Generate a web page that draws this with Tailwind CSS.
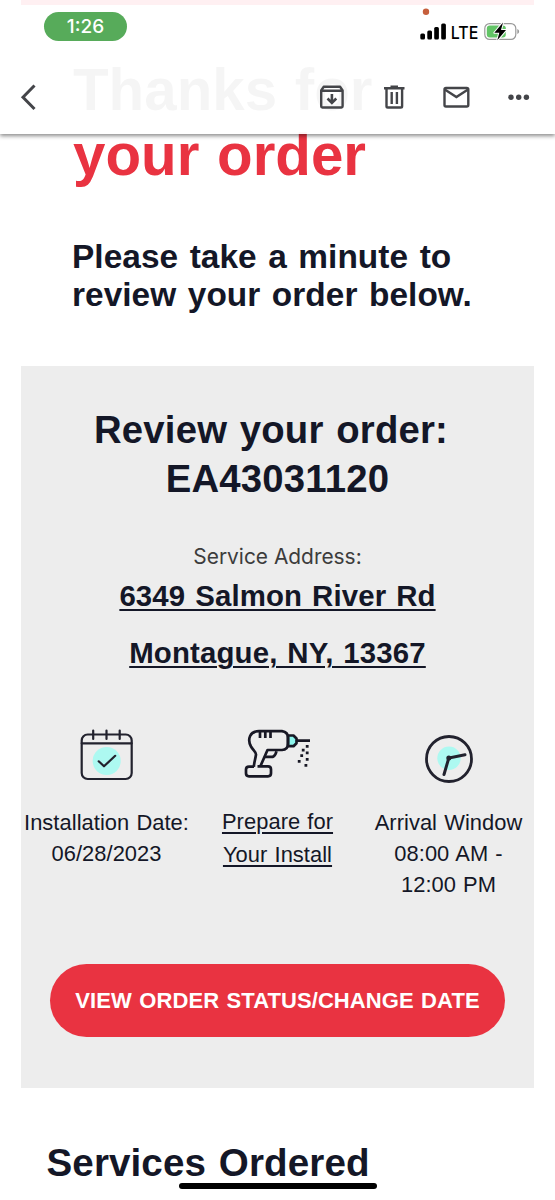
<!DOCTYPE html>
<html lang="en">
<head>
<meta charset="utf-8">
<meta name="viewport" content="width=device-width, initial-scale=1">
<title>Order confirmation</title>
<script src="https://cdn.jsdelivr.net/npm/@tailwindcss/browser@4"></script>
</head>
<body class="bg-white">
<div class="relative h-[1200px] w-[555px] overflow-hidden bg-white font-['Liberation_Sans',Arial,sans-serif] text-[#141727]">

  <!-- Mail app header -->
  <header class="absolute inset-x-0 top-0 z-10 flex h-[134px] flex-col bg-white/95 shadow-[0_2px_4px_rgba(0,0,0,0.45)]">
    <div class="mx-[21px] h-[5px] bg-[#fff0f2]"></div>
    <div class="flex h-[55px] items-start justify-between pr-[35px] pl-[44px]">
      <div class="mt-[7px] flex h-[29px] w-[83px] items-center justify-center rounded-full bg-[#57ab5a] pt-[2px] font-['Inter',sans-serif] text-[19px] font-medium text-white">1:26</div>
      <svg class="h-[40px] w-[104px]" viewBox="416 5 104 40" fill="none">
        <circle cx="426" cy="11.800" r="3.200" fill="#c65f3c"/>
        <g fill="#000">
          <rect x="420.300" y="33.500" width="4.700" height="6" rx="1.500"/>
          <rect x="427.300" y="30.500" width="4.700" height="9" rx="1.500"/>
          <rect x="434.200" y="27" width="4.700" height="12.500" rx="1.500"/>
          <rect x="441.200" y="23.500" width="4.700" height="16" rx="1.500"/>
        </g>
        <text x="450.800" y="38.500" font-family="Inter, sans-serif" font-size="17.500" font-weight="500" fill="#000" textLength="27.500" lengthAdjust="spacingAndGlyphs">LTE</text>
        <rect x="484.800" y="23.600" width="31" height="15.800" rx="4.800" stroke="#9a9a9a" stroke-width="1.200"/>
        <path d="M517.300 29v5c2.400-1 2.400-4 0-5z" fill="#9a9a9a"/>
        <rect x="486.800" y="25.600" width="19" height="11.800" rx="3" fill="#62c466"/>
        <path d="M503 22.500 494.300 32.800h5l-2 7.500 8.700-10.300h-5z" fill="#000" stroke="#fff" stroke-width="2" paint-order="stroke" stroke-linejoin="round"/>
      </svg>
    </div>
    <div class="flex h-[74px] items-center">
      <svg class="h-[74px] w-[555px]" viewBox="0 60 555 74" fill="none" stroke="#444549" stroke-width="2.400">
        <path d="M34.500 85.500 23 97.200 34.500 109" stroke-width="3"/>
        <g stroke-linejoin="round">
          <path d="M321.200 90.500v15.800q0 1.200 1.200 1.200h19q1.200 0 1.200-1.200V90.500l-2.400-3.700h-16.600zM321.200 90.800h21.400"/>
          <path d="M331.900 94v8M327.500 98.500l4.400 4.400 4.400-4.400" stroke-linejoin="miter" stroke-width="2.600"/>
        </g>
        <path d="M384 88.200h20.500M390.500 86.600h7.500" />
        <path d="M386.500 88.200v18q0 1.300 1.300 1.300h13q1.300 0 1.300-1.300v-18" />
        <path d="M391.700 92v12M396.900 92v12"/>
        <rect x="444.500" y="88" width="23.800" height="18.500" rx="1.500"/>
        <path d="M444.800 89.500l11.600 7.600 11.600-7.600"/>
        <g fill="#444549" stroke="none"><circle cx="511" cy="97.200" r="2.700"/><circle cx="518.700" cy="97.200" r="2.700"/><circle cx="526.400" cy="97.200" r="2.700"/></g>
      </svg>
    </div>
  </header>

  <!-- Message -->
  <main class="pt-[57px]">
    <h1 class="pl-[73px] text-[58.3px] leading-[65px] font-bold [word-spacing:1.5px]"><span class="block text-[#444]">Thanks for</span><span class="block text-[#e93341]">your order</span></h1>
    <p class="mt-[51px] pl-[72px] text-[33.4px] leading-[38px] font-bold tracking-[0.05px] [word-spacing:2.2px]">Please take a minute to<br>review your order below.</p>

    <section class="mx-[21px] mt-[52px] h-[722px] bg-[#ededed] pt-[39px] text-center">
      <h2 class="text-[38.3px] leading-[49px] font-bold tracking-[0.2px] [word-spacing:1.8px]"><span class="pr-[13px]">Review your order:</span><br>EA43031120</h2>
      <p class="mt-[43px] font-['Inter',sans-serif] text-[20.9px] leading-[22px] text-[#3c3c3c]">Service Address:</p>
      <p class="-mt-px text-[29.4px] leading-[57px] font-bold tracking-[0.15px] underline decoration-2 underline-offset-[3px] [word-spacing:1.5px]">6349 Salmon River Rd<br>Montague, NY, 13367</p>

      <div class="mt-[34px] grid h-[184px] grid-cols-3 text-[21.9px] leading-[31px] tracking-[0.05px] [word-spacing:1px]">
        <div class="flex flex-col items-center">
          <svg class="mb-[11.5px] h-[80px] w-[100px] shrink-0" viewBox="-3.200 0 100 80" fill="none" stroke="#22222e" stroke-width="2.200" stroke-linecap="round" stroke-linejoin="round">
            <circle cx="46.500" cy="46" r="14" fill="#adf9f1" stroke="none"/>
            <rect x="21.500" y="19.500" width="50" height="44.500" rx="6"/>
            <path d="M21.500 28.300h50M33 15.500v8.500M46.300 15.500v8.500M59.500 15.500v8.500M38.500 46.300l5.300 5 11.200-10.500"/>
          </svg>
          <p class="whitespace-nowrap">Installation Date:<br>06/28/2023</p>
        </div>
        <div class="flex flex-col items-center">
          <svg class="mb-[11px] h-[80px] w-[100px] shrink-0" viewBox="-2 0 100 80" fill="none" stroke="#181825" stroke-width="2.700" stroke-linejoin="round">
            <path d="M58 20.500h5.500l3 3v4.700l-3 3H58z" fill="#8df5ec"/>
            <path d="M24 52c-.5-2.500 1.600-8.500 2-12.500.2-2.500-3-4.500-5-8-4-7.500-1-15.300 8-15.300h23q6 1 6 6.300v6q0 6.300-6 6.500H37.500L30.500 51M24 51.600H19q-3 0-3 3v3.700q0 3 3 3h19q3 0 3-3v-4q0-3-3-3H27.500"/>
            <path d="M30 17v6M35.300 17v6M40.500 17v6M67 25.700h13M34.500 41.800h8.500q2.500-1.300 3.500-5.500"/>
            <g fill="#181825" stroke="none"><path d="M75.800 30h2.800v2.800h-2.800zM71.800 33.800h2.800v2.800h-2.800zM75.800 36.500h2.800v2.800h-2.800zM70.300 39.300h2.800v2.800h-2.800zM75.800 43h2.800v2.800h-2.800zM67.800 45h2.800v2.800h-2.800zM74.500 49h2.800v2.800h-2.800z"/></g>
          </svg>
          <p class="leading-[32.5px] underline decoration-[1.5px] underline-offset-[3px]">Prepare for<br>Your Install</p>
        </div>
        <div class="flex flex-col items-center">
          <svg class="mb-[11.5px] h-[80px] w-[100px] shrink-0" viewBox="-1.500 0 100 80" fill="none" stroke="#22222e" stroke-width="3" stroke-linecap="round">
            <circle cx="48.500" cy="43.300" r="11.700" fill="#adf9f1" stroke="none"/>
            <circle cx="48.500" cy="44" r="22.500" stroke-width="2.800"/>
            <path d="M64.500 39.800 48.300 43 43.500 59.500"/>
            <circle cx="48.300" cy="43" r="2.500" fill="#22222e" stroke="none"/>
          </svg>
          <p class="whitespace-nowrap">Arrival Window<br>08:00 AM -<br>12:00 PM</p>
        </div>
      </div>

      <a class="mx-[29px] mt-[65px] flex h-[72.500px] items-center justify-center rounded-full bg-[#e93341] text-[22px] font-bold tracking-[0.08px] whitespace-nowrap text-white [word-spacing:1.2px]">VIEW ORDER STATUS/CHANGE DATE</a>
    </section>

    <h2 class="mt-[51px] pl-[46.5px] text-[38.6px] leading-[48px] font-bold tracking-[0.1px] [word-spacing:2px]">Services Ordered</h2>
  </main>

  <!-- Home indicator -->
  <div class="absolute top-[1183px] left-[179px] z-10 h-[6px] w-[198px] rounded-full bg-black"></div>
</div>
</body>
</html>
